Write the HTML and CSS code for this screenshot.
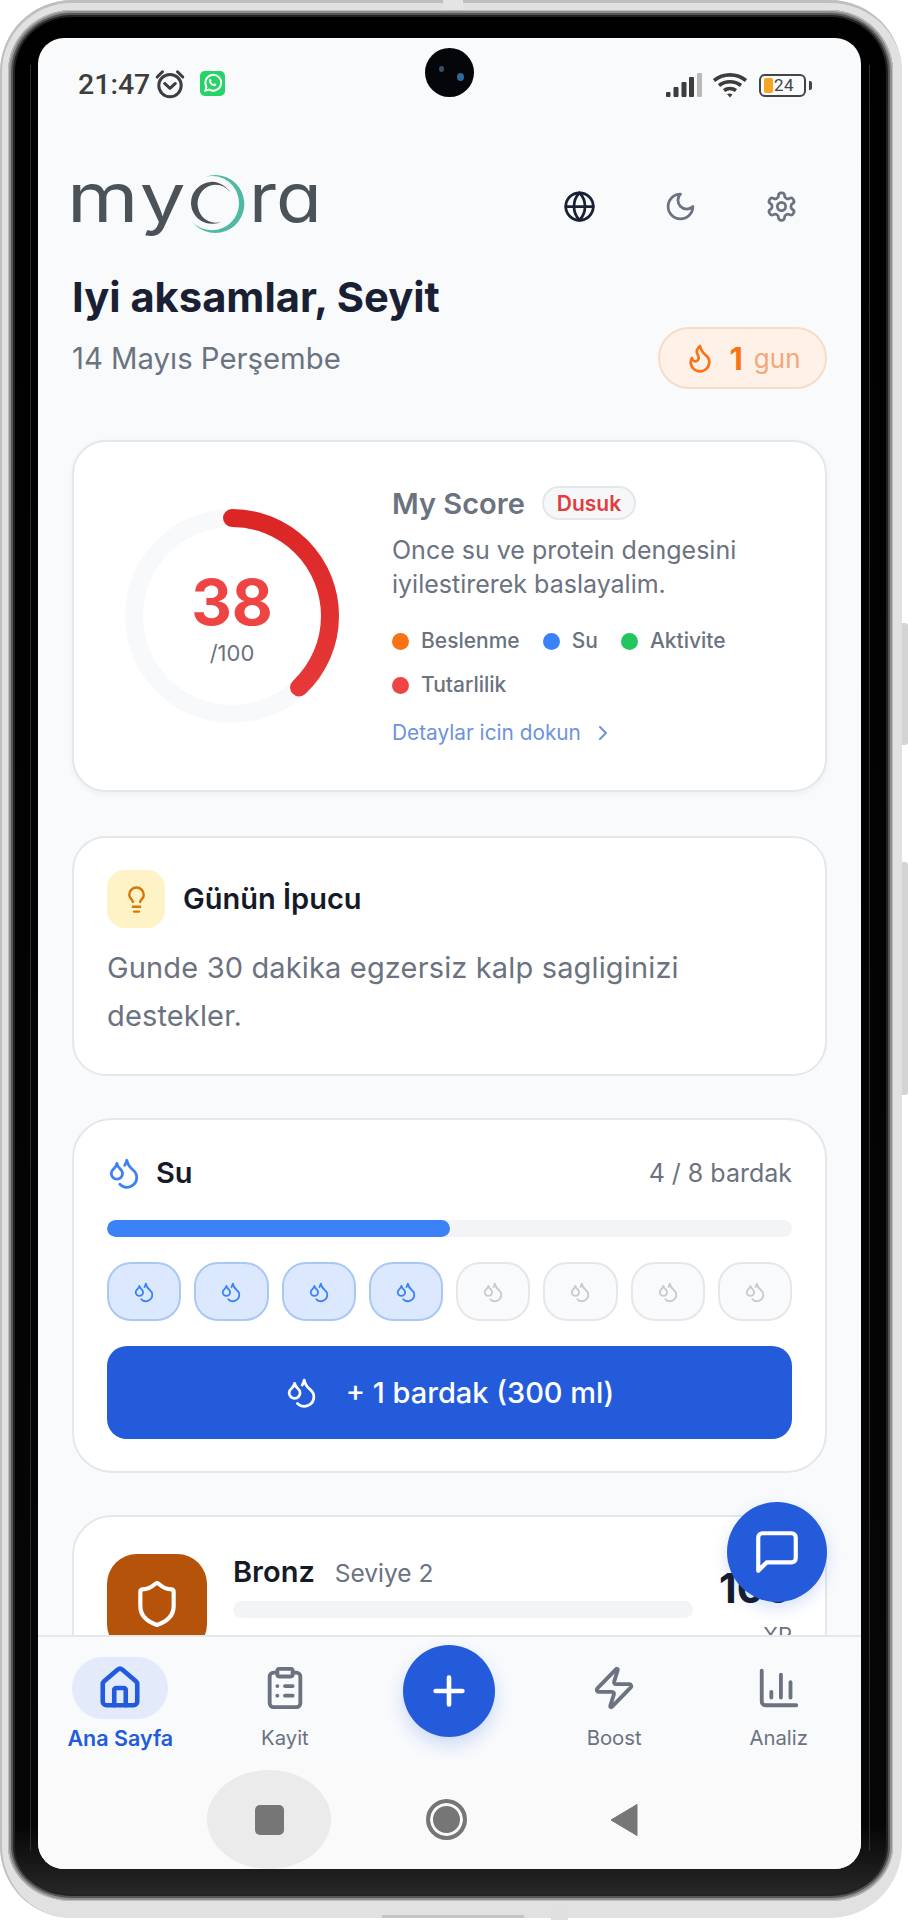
FILE: index.html
```html
<!DOCTYPE html>
<html lang="tr">
<head>
<meta charset="utf-8">
<title>Myora</title>
<link rel="stylesheet" href="styles.css">
</head>
<body>
<svg class="defs" width="0" height="0" aria-hidden="true">
  <symbol id="drops" viewBox="0 0 24 24">
    <path d="M7 16.3c2.2 0 4-1.83 4-4.05 0-1.16-.57-2.26-1.71-3.19S7.29 6.75 7 5.3c-.29 1.45-1.14 2.84-2.29 3.76S3 11.1 3 12.25c0 2.22 1.8 4.05 4 4.05z"/>
    <path d="M12.56 6.6A10.97 10.97 0 0 0 14 3.02c.5 2.5 2 4.9 4 6.5s3 3.5 3 5.5a6.98 6.98 0 0 1-11.91 4.97"/>
  </symbol>
</svg>
<div class="phone">
  <span class="tab-top"></span>
  <span class="side side-a"></span>
  <span class="side side-b"></span>
  <span class="edge-bottom"></span>
  <span class="tab-bottom"></span>
  <div class="screen">
    <div class="camera"><span class="lens lens-a"></span><span class="lens lens-b"></span></div>

    <div class="status">
      <div class="status-left">
        <span class="clock">21:47</span>
        <svg class="alarm" viewBox="0 0 30 28"><circle cx="15" cy="15.5" r="10.5"/><path d="M10 13.5l5 4.5 5-4.5"/><path d="M3 7.5 8 2.5"/><path d="M27 7.5 22 2.5"/></svg>
        <svg class="wa" viewBox="0 0 26 26"><rect width="26" height="26" rx="5" class="wa-bg"/><path class="wa-ring" d="M5.5 20.5l1.2-4.2a8.2 8.2 0 1 1 3 3z"/><path class="wa-phone" d="M10 8.4c-.7.5-1 1.500-.6 2.800 .8 2.200 2.500 3.800 4.600 4.500 1.300.4 2.300 0 2.800-.8l.2-1.100-2-1-.9 1c-1.200-.5-2.200-1.400-2.800-2.600l.8-.9-.9-2z"/></svg>
      </div>
      <div class="status-right">
        <svg class="signal" viewBox="0 0 36 24"><rect x="0" y="19" width="4.500" height="5" rx="1"/><rect x="7.500" y="14" width="5" height="10" rx="1"/><rect x="15.500" y="9" width="5" height="15" rx="1"/><rect x="23" y="4" width="5" height="20" rx="1"/><rect class="signal-off" x="31" y="0" width="5" height="24" rx="1"/></svg>
        <svg class="wifi" viewBox="0 0 36 26"><path d="M2 8.500C11 1 25 1 34 8.500"/><path d="M7 13.500c6.500-5 15.500-5 22 0"/><path d="M12 18.500c3.500-2.500 8.500-2.500 12 0"/><path class="wifi-dot" d="M14.500 21.500 18 25.500l2.500-3c-2-1.500-4-1.500-6 0z"/></svg>
        <div class="battery"><span class="battery-fill"></span><span class="battery-num">24</span><span class="battery-nub"></span></div>
      </div>
    </div>

    <main class="content">
      <header class="top">
        <div class="logo">
          <span class="logo-text logo-head">my</span>
          <svg class="logo-o" viewBox="0 0 60 62"><path class="logo-teal" d="M17.700 3.700A29 29 0 1 1 4.300 48.700 27 27 0 0 0 51 30 27 27 0 0 0 17.700 3.700z"/><path class="logo-dark" d="M42.700 20.300A21 21 0 1 0 33.300 48.700 18 19 0 1 1 42.700 20.300z"/></svg>
          <span class="logo-text logo-tail">ra</span>
        </div>
        <div class="top-icons">
          <svg class="ico top-ico ico-dark" viewBox="0 0 24 24"><circle cx="12" cy="12" r="10"/><path d="M12 2a14.500 14.500 0 0 0 0 20 14.500 14.500 0 0 0 0-20"/><path d="M2 12h20"/></svg>
          <svg class="ico top-ico" viewBox="0 0 24 24"><path d="M12 3a6 6 0 0 0 9 9 9 9 0 1 1-9-9Z"/></svg>
          <svg class="ico top-ico" viewBox="0 0 24 24"><path d="M12.220 2h-.44a2 2 0 0 0-2 2v.18a2 2 0 0 1-1 1.730l-.43.25a2 2 0 0 1-2 0l-.15-.08a2 2 0 0 0-2.730.73l-.22.38a2 2 0 0 0 .73 2.730l.15.1a2 2 0 0 1 1 1.720v.51a2 2 0 0 1-1 1.740l-.15.09a2 2 0 0 0-.73 2.730l.22.38a2 2 0 0 0 2.730.73l.15-.08a2 2 0 0 1 2 0l.43.25a2 2 0 0 1 1 1.730V20a2 2 0 0 0 2 2h.44a2 2 0 0 0 2-2v-.18a2 2 0 0 1 1-1.730l.43-.25a2 2 0 0 1 2 0l.15.08a2 2 0 0 0 2.730-.73l.22-.39a2 2 0 0 0-.73-2.730l-.15-.08a2 2 0 0 1-1-1.740v-.5a2 2 0 0 1 1-1.740l.15-.09a2 2 0 0 0 .73-2.730l-.22-.38a2 2 0 0 0-2.730-.73l-.15.08a2 2 0 0 1-2 0l-.43-.25a2 2 0 0 1-1-1.730V4a2 2 0 0 0-2-2z"/><circle cx="12" cy="12" r="3"/></svg>
        </div>
      </header>

      <h1 class="greeting">Iyi aksamlar, Seyit</h1>
      <div class="date-row">
        <span class="date">14 Mayıs Perşembe</span>
        <div class="streak">
          <svg class="ico flame" viewBox="0 0 24 24"><path d="M8.500 14.500A2.500 2.500 0 0 0 11 12c0-1.380-.5-2-1-3-1.072-2.143-.224-4.054 2-6 .5 2.500 2 4.900 4 6.500 2 1.600 3 3.500 3 5.500a7 7 0 1 1-14 0c0-1.153.433-2.294 1-3a2.500 2.500 0 0 0 2.500 2.500z"/></svg>
          <b class="streak-num">1</b><span class="streak-unit">gun</span>
        </div>
      </div>

      <section class="card score-card">
        <div class="ring">
          <svg class="ring-svg" viewBox="0 0 220 220">
            <defs><linearGradient id="ringGrad" x1="1" y1="0" x2="0" y2="0"><stop offset="0" stop-color="#dc2626"/><stop offset="1" stop-color="#e73b3b"/></linearGradient></defs>
            <circle class="ring-track" cx="110" cy="110" r="98"/>
            <circle class="ring-value" cx="110" cy="110" r="98" pathLength="100" stroke-dasharray="38 100" transform="rotate(-90 110 110)"/>
          </svg>
          <div class="ring-label"><strong class="ring-num">38</strong><span class="ring-max">/100</span></div>
        </div>
        <div class="score-body">
          <div class="score-head"><h2 class="score-title">My Score</h2><span class="badge">Dusuk</span></div>
          <p class="score-desc">Once su ve protein dengesini iyilestirerek baslayalim.</p>
          <ul class="legend">
            <li class="legend-item"><i class="dot dot-orange"></i>Beslenme</li>
            <li class="legend-item"><i class="dot dot-blue"></i>Su</li>
            <li class="legend-item"><i class="dot dot-green"></i>Aktivite</li>
            <li class="legend-item"><i class="dot dot-red"></i>Tutarlilik</li>
          </ul>
          <div class="more">Detaylar icin dokun<svg class="ico more-ico" viewBox="0 0 24 24"><path d="m9 18 6-6-6-6"/></svg></div>
        </div>
      </section>

      <section class="card tip-card">
        <div class="tip-head">
          <span class="tip-box"><svg class="ico tip-ico" viewBox="0 0 24 24"><path d="M15 14c.2-1 .7-1.700 1.500-2.500 1-.9 1.500-2.200 1.500-3.500A6 6 0 0 0 6 8c0 1 .2 2.200 1.500 3.500.7.7 1.300 1.500 1.500 2.500"/><path d="M9 18h6"/><path d="M10 22h4"/></svg></span>
          <h2 class="card-title">Günün İpucu</h2>
        </div>
        <p class="tip-text">Gunde 30 dakika egzersiz kalp sagliginizi destekler.</p>
      </section>

      <section class="card water-card">
        <div class="water-head">
          <svg class="ico water-ico"><use href="#drops"/></svg>
          <h2 class="card-title">Su</h2>
          <span class="water-count">4 / 8 bardak</span>
        </div>
        <div class="bar"><span class="bar-fill" style="width:50%"></span></div>
        <div class="cups">
          <span class="cup cup-on"><svg class="ico cup-ico"><use href="#drops"/></svg></span>
          <span class="cup cup-on"><svg class="ico cup-ico"><use href="#drops"/></svg></span>
          <span class="cup cup-on"><svg class="ico cup-ico"><use href="#drops"/></svg></span>
          <span class="cup cup-on"><svg class="ico cup-ico"><use href="#drops"/></svg></span>
          <span class="cup"><svg class="ico cup-ico"><use href="#drops"/></svg></span>
          <span class="cup"><svg class="ico cup-ico"><use href="#drops"/></svg></span>
          <span class="cup"><svg class="ico cup-ico"><use href="#drops"/></svg></span>
          <span class="cup"><svg class="ico cup-ico"><use href="#drops"/></svg></span>
        </div>
        <button class="add-btn"><svg class="ico add-ico"><use href="#drops"/></svg>+ 1 bardak (300 ml)</button>
      </section>

      <section class="card level-card">
        <span class="level-box"><svg class="ico level-ico" viewBox="0 0 24 24"><path d="M20 13c0 5-3.500 7.500-7.660 8.950a1 1 0 0 1-.67-.01C7.500 20.500 4 18 4 13V6a1 1 0 0 1 1-1c2 0 4.500-1.200 6.240-2.720a1.170 1.170 0 0 1 1.520 0C14.510 3.810 17 5 19 5a1 1 0 0 1 1 1z"/></svg></span>
        <div class="level-body">
          <div class="level-head"><h2 class="card-title">Bronz</h2><span class="level-sub">Seviye 2</span></div>
          <div class="bar level-bar"></div>
          <div class="level-note">0/100 XP · 2 kaldi</div>
        </div>
        <div class="level-xp"><strong class="xp-num">100</strong><span class="xp-unit">XP</span></div>
      </section>
    </main>

    <button class="fab"><svg class="ico fab-ico" viewBox="0 0 24 24"><path d="M21 15a2 2 0 0 1-2 2H7l-4 4V5a2 2 0 0 1 2-2h14a2 2 0 0 1 2 2z"/></svg></button>

    <nav class="tabs">
      <div class="tab tab-active">
        <span class="tab-pill"><svg class="ico tab-ico home-ico" viewBox="0 0 24 24"><path d="M15 21v-8a1 1 0 0 0-1-1h-4a1 1 0 0 0-1 1v8"/><path d="M3 10a2 2 0 0 1 .709-1.528l7-5.999a2 2 0 0 1 2.582 0l7 5.999A2 2 0 0 1 21 10v9a2 2 0 0 1-2 2H5a2 2 0 0 1-2-2z"/></svg></span>
        <span class="tab-label">Ana Sayfa</span>
      </div>
      <div class="tab">
        <span class="tab-pill"><svg class="ico tab-ico" viewBox="0 0 24 24"><rect x="8" y="2" width="8" height="4" rx="1"/><path d="M16 4h2a2 2 0 0 1 2 2v14a2 2 0 0 1-2 2H6a2 2 0 0 1-2-2V6a2 2 0 0 1 2-2h2"/><path d="M12 11h4"/><path d="M12 16h4"/><path d="M8 11h.01"/><path d="M8 16h.01"/></svg></span>
        <span class="tab-label">Kayit</span>
      </div>
      <div class="tab">
        <button class="plus"><svg class="ico plus-ico" viewBox="0 0 24 24"><path d="M5 12h14"/><path d="M12 5v14"/></svg></button>
      </div>
      <div class="tab">
        <span class="tab-pill"><svg class="ico tab-ico" viewBox="0 0 24 24"><path d="M4 14a1 1 0 0 1-.78-1.630l9.900-10.200a.5.5 0 0 1 .86.46l-1.920 6.020A1 1 0 0 0 13 10h7a1 1 0 0 1 .78 1.630l-9.900 10.200a.5.5 0 0 1-.86-.46l1.920-6.020A1 1 0 0 0 11 14z"/></svg></span>
        <span class="tab-label">Boost</span>
      </div>
      <div class="tab">
        <span class="tab-pill"><svg class="ico tab-ico" viewBox="0 0 24 24"><path d="M3 3v16a2 2 0 0 0 2 2h16"/><path d="M18 17V9"/><path d="M13 17V5"/><path d="M8 17v-3"/></svg></span>
        <span class="tab-label">Analiz</span>
      </div>
    </nav>

    <div class="sysnav">
      <div class="sys sys-pressed"><span class="sys-square"></span></div>
      <div class="sys"><span class="sys-circle"></span></div>
      <div class="sys"><svg class="sys-back" viewBox="0 0 29 34"><path d="M28 1.500V32.500L2 17z"/></svg></div>
    </div>
  </div>
</div>
</body>
</html>
```
FILE: styles.css
```css
* { box-sizing: border-box; }
html, body { margin: 0; padding: 0; background: #fff; }
body { font-family: "Inter", "Noto Sans", sans-serif; width: 908px; height: 1920px; overflow: hidden; }
h1, h2, p, ul { margin: 0; padding: 0; }
button { border: 0; padding: 0; font: inherit; cursor: pointer; }
.defs { position: absolute; }

/* device frame */
.phone {
  position: relative;
  width: 902px;
  height: 1918px;
  padding: 28px 32px 32px 30px;
  border: solid #e1e1e1;
  border-width: 10px 9px 17px 8px;
  border-radius: 72px;
  background: linear-gradient(#000 0, #060606 96%, #2a2a2a 100%);
  box-shadow: inset 0 0 0 1px #bdbdbd, inset 0 0 0 3px #8f8f8f, inset 0 0 0 5px #555, inset 0 0 0 7px #222;
}
.phone::before { content: ""; position: absolute; left: 22px; right: 23px; top: 55px; bottom: 50px; border: solid #303030; border-width: 0 1px; }
.phone::after { content: ""; position: absolute; inset: -10px -9px -17px -8px; border: solid #bfbfbf; border-width: 3px 0 0 2px; border-radius: 72px; pointer-events: none; }
.tab-top { position: absolute; left: 435px; top: -10px; width: 20px; height: 10px; background: #e4e4e4; z-index: 1; }
.side { position: absolute; right: -15px; width: 6px; background: #d4d4d4; border-radius: 0 3px 3px 0; }
.side-a { top: 613px; height: 122px; }
.side-b { top: 852px; height: 233px; }
.edge-bottom { position: absolute; left: 374px; bottom: -17px; width: 142px; height: 3px; background: #c4c4c4; }
.tab-bottom { position: absolute; left: 543px; bottom: -19px; width: 17px; height: 17px; background: #e0e0e0; }

.screen {
  position: relative;
  z-index: 1;
  display: flex;
  flex-direction: column;
  width: 823px;
  height: 1831px;
  overflow: hidden;
  border-radius: 26px;
  background: #f9fafc;
}
.camera { position: absolute; left: 387px; top: 10px; width: 49px; height: 49px; border-radius: 50%; background: #05060a; }
.lens { position: absolute; border-radius: 50%; }
.lens-a { left: 14px; top: 18px; width: 5px; height: 6px; background: #3b5166; }
.lens-b { left: 32px; top: 25px; width: 7px; height: 8px; background: #2a6a9c; }

/* status bar */
.status { flex: none; height: 94px; display: flex; justify-content: space-between; align-items: center; padding: 0 55px 0 40px; }
.status-left, .status-right { display: flex; align-items: center; }
.clock { font: 500 28.5px/1 "Roboto", sans-serif; color: #3d3d3d; }
.alarm { width: 32px; height: 30px; margin: -3px 0 0 4px; fill: none; stroke: #3d3d3d; stroke-width: 2.8; stroke-linecap: round; stroke-linejoin: round; }
.wa { width: 25px; height: 25px; margin: -3px 0 0 14px; }
.wa-bg { fill: #25d366; }
.wa-ring { fill: none; stroke: #fff; stroke-width: 2; }
.wa-phone { fill: #fff; }
.signal { width: 36px; height: 24px; fill: #3d3d3d; }
.signal-off { fill: #b9b9b9; }
.wifi { width: 36px; height: 26px; margin-left: 10px; fill: none; stroke: #3d3d3d; stroke-width: 3.6; }
.wifi-dot { fill: #3d3d3d; stroke: none; }
.battery { position: relative; width: 47px; height: 23px; margin-left: 11px; border: 2px solid #444; border-radius: 6px; display: flex; align-items: center; }
.battery-fill { width: 9px; height: 15px; margin-left: 3px; border-radius: 2px; background: #f5a623; }
.battery-num { font: 400 17px/1 "Roboto", sans-serif; color: #444; margin-left: 1px; letter-spacing: .5px; }
.battery-nub { position: absolute; right: -8px; top: 5px; width: 3px; height: 9px; border-radius: 0 2px 2px 0; background: #444; }

/* scroll area */
.content { flex: 1; min-height: 0; overflow: hidden; padding: 0 34px; }
.top { height: 72px; margin-top: 38px; display: flex; justify-content: space-between; align-items: center; }
.logo { display: flex; align-items: center; height: 72px; margin-left: -5px; }
.logo-text { align-self: flex-start; margin-top: -9px; font-size: 68px; font-weight: 400; line-height: 72px; color: #4b5359; font-feature-settings: "cv11"; transform-origin: left center; }
.logo-head { letter-spacing: 2px; transform: scaleX(1.2); }
.logo-o { width: 60px; height: 62px; margin: -4px 0 0 20px; flex: none; }
.logo-tail { margin-left: 1px; transform: scaleX(1.1); }
.logo-teal { fill: #4fb9a4; }
.logo-dark { fill: #4b5359; }
.ico { fill: none; stroke: currentColor; stroke-width: 2; stroke-linecap: round; stroke-linejoin: round; }
.top-icons { display: flex; gap: 68px; padding-right: 29px; }
.top-ico { width: 33px; height: 33px; color: #6b7280; }
.ico-dark { color: #1a2033; }

.greeting { margin-top: 30px; font-size: 41.7px; line-height: 50px; font-weight: 700; color: #1a2033; }
.date-row { margin-top: 5px; height: 62px; display: flex; justify-content: space-between; align-items: center; }
.date { font-size: 29.3px; color: #6b7280; }
.streak { height: 62px; width: 169px; display: flex; align-items: center; justify-content: center; border: 2px solid #f8dcc5; border-radius: 31px; background: #fdf1e8; }
.flame { width: 32px; height: 32px; color: #f97316; }
.streak-num { margin-left: 13px; font-size: 31px; font-weight: 700; color: #f97316; }
.streak-unit { margin-left: 11px; font-size: 26px; color: #f2a878; }

/* cards */
.card { background: #fff; border: 2px solid #e5e7eb; border-radius: 34px; }
.score-card { margin-top: 51px; height: 352px; display: flex; align-items: center; gap: 50px; padding-left: 48px; box-shadow: 0 2px 6px rgba(0, 0, 0, .05); }
.ring { position: relative; flex: none; width: 220px; height: 220px; }
.ring-svg { display: block; width: 220px; height: 220px; }
.ring-track, .ring-value { fill: none; stroke-width: 18; }
.ring-track { stroke: #f8f9fb; }
.ring-value { stroke: url(#ringGrad); stroke-linecap: round; }
.ring-label { position: absolute; inset: 0; display: flex; flex-direction: column; align-items: center; justify-content: center; }
.ring-num { font-size: 63px; line-height: 70px; font-weight: 700; color: #ef4444; margin-top: 3px; }
.ring-max { font-size: 22px; line-height: 30px; color: #6b7280; margin-top: 1px; }
.score-body { flex: 1; min-width: 0; }
.score-head { display: flex; align-items: center; gap: 17px; height: 34px; }
.score-title { font-size: 29px; font-weight: 600; color: #6b7280; }
.badge { height: 34px; padding: 0 13px; display: flex; align-items: center; border: 2px solid #e5e7eb; border-radius: 17px; background: #f6f7f9; font-size: 21px; font-weight: 600; color: #e03e3e; }
.score-desc { margin-top: 13px; width: 400px; font-size: 25px; line-height: 34px; color: #6b7280; }
.legend { margin-top: 28px; list-style: none; display: flex; flex-wrap: wrap; gap: 20px 23px; width: 370px; }
.legend-item { display: flex; align-items: center; gap: 12px; font-size: 21px; line-height: 24px; font-weight: 500; color: #6b7280; }
.dot { width: 17px; height: 17px; border-radius: 50%; }
.dot-orange { background: #f97316; }
.dot-blue { background: #3b82f6; }
.dot-green { background: #22c55e; }
.dot-red { background: #ef4444; }
.more { margin-top: 23px; display: flex; align-items: center; gap: 10px; font-size: 20.8px; line-height: 26px; font-weight: 400; color: #6c93dc; }
.more-ico { width: 24px; height: 24px; }

.tip-card { margin-top: 44px; padding: 32px 33px 34px; }
.tip-head { display: flex; align-items: center; gap: 18px; }
.tip-box { width: 58px; height: 58px; display: flex; align-items: center; justify-content: center; border-radius: 18px; background: #fef3c7; }
.tip-ico { width: 29px; height: 29px; color: #d97706; }
.card-title { font-size: 29px; line-height: 36px; font-weight: 600; color: #151a28; }
.tip-text { margin-top: 16px; font-size: 29px; letter-spacing: .15px; line-height: 48px; color: #6b7280; }

.water-card { margin-top: 42px; padding: 35px 33px 32px; border-radius: 40px; }
.water-head { display: flex; align-items: center; height: 36px; }
.water-ico { width: 34px; height: 34px; color: #3b82f6; }
.water-head .card-title { margin-left: 15px; }
.water-count { margin-left: auto; font-size: 25px; color: #6b7280; }
.bar { height: 17px; border-radius: 9px; background: #f3f4f6; overflow: hidden; }
.water-card .bar { margin-top: 29px; }
.bar-fill { display: block; height: 100%; border-radius: 9px; background: #3b82f6; }
.cups { margin-top: 25px; display: grid; grid-template-columns: repeat(8, 1fr); gap: 13px; }
.cup { height: 59px; display: flex; align-items: center; justify-content: center; border: 2px solid #e5e7eb; border-radius: 24px; background: #f9fafb; color: #c7cad1; }
.cup-on { border-color: #a9c8f5; background: #dbe8fd; color: #3b82f6; }
.cup-ico { width: 22px; height: 22px; }
.add-btn { margin-top: 25px; width: 100%; height: 93px; display: flex; align-items: center; justify-content: center; gap: 28px; border-radius: 20px; background: #245bdb; color: #fff; font-size: 29px; font-weight: 500; }
.add-ico { width: 33px; height: 33px; }

.level-card { margin-top: 42px; padding: 37px 33px; display: flex; gap: 26px; border-radius: 40px; }
.level-box { flex: none; width: 100px; height: 100px; display: flex; align-items: center; justify-content: center; border-radius: 30px; background: #b45309; }
.level-ico { width: 50px; height: 50px; color: #fff; }
.level-body { flex: 1; min-width: 0; }
.level-head { display: flex; align-items: baseline; gap: 20px; height: 36px; }
.level-sub { font-size: 24.5px; color: #6b7280; }
.level-bar { margin-top: 11px; }
.level-note { margin-top: 15px; font-size: 21px; line-height: 26px; color: #9ca3af; }
.level-xp { flex: none; margin-top: 9px; display: flex; flex-direction: column; align-items: flex-end; }
.xp-num { font-size: 41px; line-height: 50px; font-weight: 700; color: #151a28; }
.xp-unit { margin-top: 8px; font-size: 22px; line-height: 28px; color: #6b7280; }

.fab { position: absolute; left: 689px; top: 1464px; width: 100px; height: 100px; display: flex; align-items: center; justify-content: center; border-radius: 50%; background: #245bdb; color: #fff; box-shadow: 0 6px 16px rgba(36, 91, 219, .18); }
.fab-ico { width: 50px; height: 50px; }

/* tabs */
.tabs { position: relative; flex: none; height: 125px; padding-top: 20px; display: grid; grid-template-columns: repeat(5, 1fr); border-top: 2px solid #e5e7eb; background: #f8fafc; }
.tab { display: flex; flex-direction: column; align-items: center; gap: 6px; }
.tab-pill { width: 96px; height: 62px; display: flex; align-items: center; justify-content: center; border-radius: 31px; color: #6b7280; }
.tab-ico { width: 46px; height: 46px; }
.tab-label { font-size: 20.3px; line-height: 26px; font-weight: 400; color: #6b7280; }
.tab-active .tab-pill { background: #e3eafa; color: #245bdb; }
.tab-active .tab-label { color: #245bdb; font-size: 21.5px; font-weight: 600; }
.home-ico { stroke-width: 2.400; }
.plus { width: 92px; height: 92px; margin-top: -12px; display: flex; align-items: center; justify-content: center; border-radius: 50%; background: #245bdb; color: #fff; box-shadow: 0 8px 18px rgba(36, 91, 219, .2); }
.plus-ico { width: 46px; height: 46px; stroke-width: 2.400; }

/* android nav */
.sysnav { flex: none; height: 109px; padding: 10px 7px 0 0; display: flex; justify-content: center; gap: 53px; background: #fafafa; }
.sys { width: 124px; height: 99px; display: flex; align-items: center; justify-content: center; }
.sys-pressed { border-radius: 50%; background: #ebebeb; }
.sys-square { width: 29px; height: 30px; border-radius: 5px; background: #767676; }
.sys-circle { width: 41px; height: 41px; border-radius: 50%; background: #767676; border: 4px solid #767676; box-shadow: inset 0 0 0 3px #fafafa; }
.sys-back { width: 29px; height: 34px; fill: #767676; stroke: #767676; stroke-width: 1; stroke-linejoin: round; }
```
